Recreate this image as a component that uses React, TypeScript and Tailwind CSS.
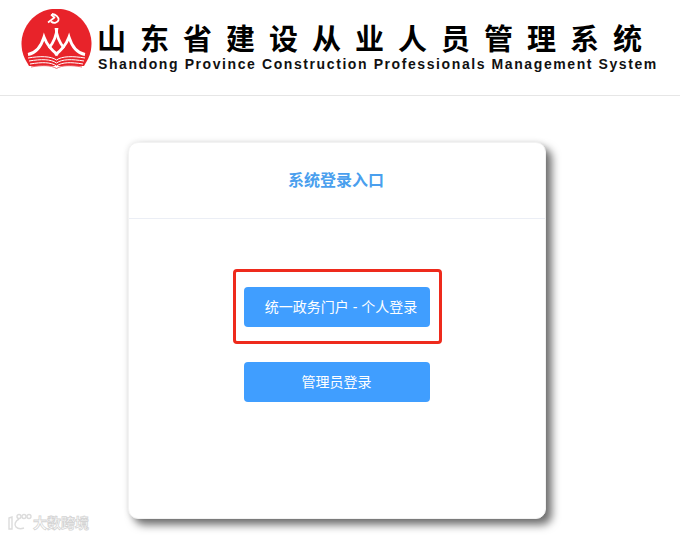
export default function App() {
  return (
    <div className="relative w-[680px] h-[536px] overflow-hidden bg-white font-['Liberation_Sans','Noto_Sans_CJK_SC',sans-serif]">
      <header className="h-[96px] border-b border-[#e6e6e6] flex items-start pl-[21px] pt-[9px]">
        <svg width="71" height="64" viewBox="0 0 71 64" className="shrink-0">
          <path d="M4 50 A35 35 0 1 1 67 50 L63 57 L8 57 Z" fill="#e8232a" />
          <g fill="none" stroke="#fff" strokeWidth="2.8">
            <path d="M7 45.500 C15 44 20 38 23 28 C26 36 30 41 37 46" />
            <path d="M64 45.500 C56 44 51 38 48 28 C45 36 41 41 34 46" />
            <path d="M36 19 C35.500 26 33 33 28 39" />
            <path d="M35 19 C35.500 26 38 33 43 39" />
          </g>
          <path d="M31 5 C35 5.500 38 8 37.500 11 C37 13.500 33 15 30 12.500" fill="none" stroke="#fff" strokeWidth="1.8" />
          <path d="M27 13.500 L33.500 8.500 M30 5.500 L34 9" fill="none" stroke="#fff" strokeWidth="1.7" />
          <g fill="none" stroke="#fff" strokeWidth="1">
            <path d="M7 49 C19 47 30 47 35.500 51 C41 47 52 47 64 49" />
            <path d="M8 52 C20 50 30 50 35.500 54 C41 50 51 50 63 52" />
            <path d="M9 55 C21 53 30 53 35.500 57 C41 53 50 53 62 55" />
          </g>
          <path d="M10 58 C21 56 30 56 35.500 59.500 C41 56 50 56 61 58" fill="none" stroke="#ee6a6f" strokeWidth="1" />
        </svg>
        <div className="ml-[6px] flex flex-col">
          <div className="h-[36px] mt-[10px] leading-[36px] text-[29px] font-bold text-black tracking-[14px] whitespace-nowrap ml-[-1px] font-['Noto_Sans_CJK_SC',sans-serif]">
            山东省建设从业人员管理系统
          </div>
          <div className="mt-[1px] text-[14px] leading-[16px] font-bold text-[#111] tracking-[1.59px] whitespace-nowrap">
            Shandong Province Construction Professionals Management System
          </div>
        </div>
      </header>

      <main className="flex justify-start pl-[128px] pt-[46px]">
        <section className="w-[418px] h-[377px] rounded-[10px] bg-white border border-[#f2f2f2] shadow-[6px_6px_8px_rgba(0,0,0,0.55),0_0_6px_rgba(0,0,0,0.1)]">
          <div className="h-[76px] pb-[4px] pr-[2px] border-b border-[#ebeef5] flex items-center justify-center text-[16px] font-semibold text-[#4a9fee] font-['Noto_Sans_CJK_SC',sans-serif]">
            系统登录入口
          </div>
          <div className="flex flex-col items-center pt-[68px] gap-[35px]">
            <div className="relative">
              <button className="w-[186px] h-[40px] rounded-[4px] bg-[#409eff] text-white text-[14px] pl-[8px]">
                统一政务门户 - 个人登录
              </button>
              <div className="absolute left-[-11px] top-[-18px] w-[209px] h-[75px] border-[3px] border-[#ee2a1c] rounded-[4px]" />
            </div>
            <button className="w-[186px] h-[40px] rounded-[4px] bg-[#409eff] text-white text-[14px] pr-[1px]">
              管理员登录
            </button>
          </div>
        </section>
      </main>

      <div className="absolute left-[7px] top-[513px] flex items-center gap-[1px] text-[#dcdcdc]">
        <svg width="25" height="18" viewBox="0 0 25 18" fill="none" stroke="currentColor" strokeWidth="1.4">
          <path d="M2 5 L5 4 V16 H2 Z" />
          <path d="M12 6 C8 8 7 12 9 14 C11 16 14 16 17 15" />
          <circle cx="12" cy="3.500" r="2" />
          <circle cx="17" cy="3.500" r="2" />
          <circle cx="22" cy="3.500" r="2" />
        </svg>
        <span className="text-[14px] leading-[18px] font-bold text-white [-webkit-text-stroke:0.8px_#d4d4d4] font-['Noto_Sans_CJK_SC',sans-serif]">大数跨境</span>
      </div>
    </div>
  );
}
